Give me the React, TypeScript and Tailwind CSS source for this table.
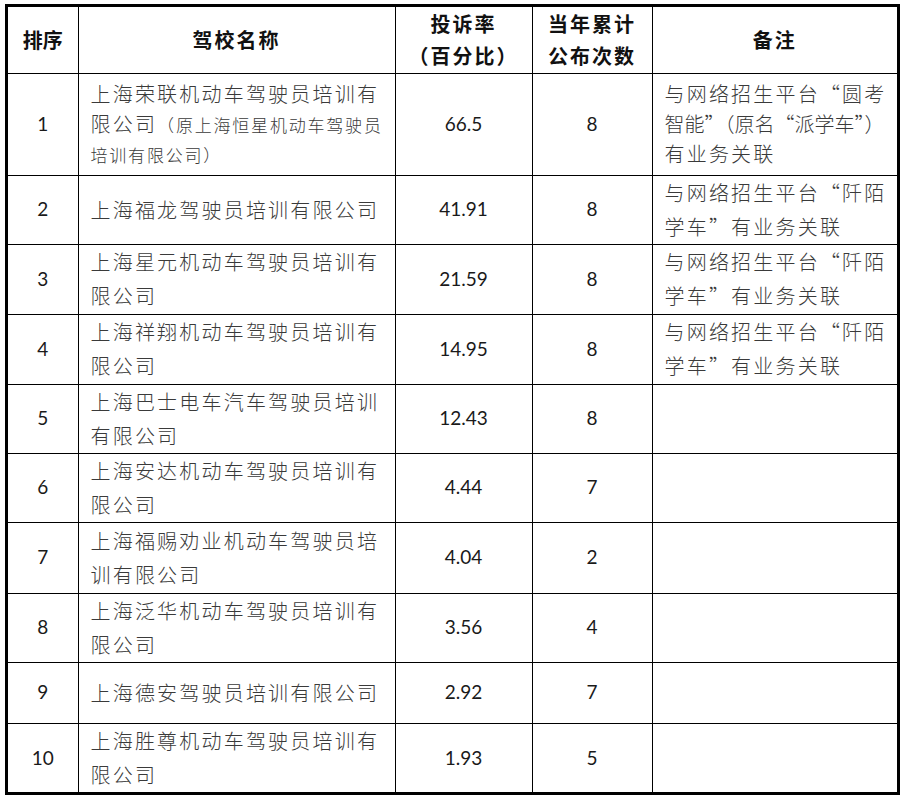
const CJK = '"Noto Sans CJK SC", sans-serif';
const NUM = 'Lato, "Noto Sans CJK SC", sans-serif';

type Row = {
  rank: string;
  name: React.ReactNode;
  rate: string;
  times: string;
  note?: string[];
  h: string;
};

const LIANHE = ['与网络招生平台“阡陌', '学车”有业务关联'];

const lines = (...ls: string[]) => ls.map((l) => <div key={l}>{l}</div>);

const rows: Row[] = [
  {
    rank: '1',
    name: (
      <>
        <div className="leading-[30px]">上海荣联机动车驾驶员培训有</div>
        <div className="leading-[30px]">
          限公司<span className="text-[17px] tracking-[1.8px]">（原上海恒星机动车驾驶员</span>
        </div>
        <div className="leading-[30px] text-[17px] tracking-[1.8px]">培训有限公司）</div>
      </>
    ),
    rate: '66.5',
    times: '8',
    note: ['与网络招生平台“圆考', '智能”（原名“派学车”）', '有业务关联'],
    h: 'h-[102px]',
  },
  { rank: '2', name: '上海福龙驾驶员培训有限公司', rate: '41.91', times: '8', note: LIANHE, h: 'h-[68px]' },
  { rank: '3', name: lines('上海星元机动车驾驶员培训有', '限公司'), rate: '21.59', times: '8', note: LIANHE, h: 'h-[70px]' },
  { rank: '4', name: lines('上海祥翔机动车驾驶员培训有', '限公司'), rate: '14.95', times: '8', note: LIANHE, h: 'h-[70px]' },
  { rank: '5', name: lines('上海巴士电车汽车驾驶员培训', '有限公司'), rate: '12.43', times: '8', h: 'h-[69px]' },
  { rank: '6', name: lines('上海安达机动车驾驶员培训有', '限公司'), rate: '4.44', times: '7', h: 'h-[68px]' },
  { rank: '7', name: lines('上海福赐劝业机动车驾驶员培', '训有限公司'), rate: '4.04', times: '2', h: 'h-[71px]' },
  { rank: '8', name: lines('上海泛华机动车驾驶员培训有', '限公司'), rate: '3.56', times: '4', h: 'h-[69px]' },
  { rank: '9', name: '上海德安驾驶员培训有限公司', rate: '2.92', times: '7', h: 'h-[61px]' },
  { rank: '10', name: lines('上海胜尊机动车驾驶员培训有', '限公司'), rate: '1.93', times: '5', h: 'h-[69px]' },
];

export default function App() {
  return (
    <div className="min-h-[797px] w-[907px] bg-white pl-[5px] pt-[4px]">
      <div className="w-[895px] border-[3px] border-black">
        <table className="w-full table-fixed border-collapse border-hidden">
          <colgroup>
            <col className="w-[70px]" />
            <col className="w-[317px]" />
            <col className="w-[137px]" />
            <col className="w-[120px]" />
            <col className="w-[245px]" />
          </colgroup>
          <thead>
            <tr className="h-[66px] text-[20px] font-bold leading-[32px] text-[#111]" style={{ fontFamily: CJK }}>
              <th className="border border-black p-0">排序</th>
              <th className="border border-black p-0 tracking-[2px]">驾校名称</th>
              <th className="border border-black p-0 tracking-[2px]">
                <div>投诉率</div>
                <div>（百分比）</div>
              </th>
              <th className="border border-black p-0 tracking-[2px]">
                <div>当年累计</div>
                <div>公布次数</div>
              </th>
              <th className="border border-black p-0 tracking-[2px]">备注</th>
            </tr>
          </thead>
          <tbody>
            {rows.map((r) => (
              <tr key={r.rank} className={r.h}>
                <td className="border border-black p-0 text-center text-[19px] text-[#1a1a1a]" style={{ fontFamily: NUM }}>
                  {r.rank}
                </td>
                <td
                  className="whitespace-nowrap border border-black py-0 pl-[12px] pr-0 text-[20px] font-light leading-[34px] tracking-[2.2px] text-[#3a3a3a]"
                  style={{ fontFamily: CJK }}
                >
                  {r.name}
                </td>
                <td className="border border-black p-0 text-center text-[19px] text-[#1a1a1a]" style={{ fontFamily: NUM }}>
                  {r.rate}
                </td>
                <td className="border border-black p-0 text-center text-[19px] text-[#1a1a1a]" style={{ fontFamily: NUM }}>
                  {r.times}
                </td>
                <td
                  className="whitespace-nowrap border border-black py-0 pl-[12px] pr-0 text-[20px] font-light leading-[34px] tracking-[2.2px] text-[#3a3a3a]"
                  style={{ fontFamily: CJK }}
                >
                  {r.note?.map((l, i) => (
                    <div key={i} className={r.rank === '1' ? (i === 1 ? 'leading-[30px] tracking-[0px]' : 'leading-[30px]') : ''}>
                      {l}
                    </div>
                  ))}
                </td>
              </tr>
            ))}
          </tbody>
        </table>
      </div>
    </div>
  );
}
